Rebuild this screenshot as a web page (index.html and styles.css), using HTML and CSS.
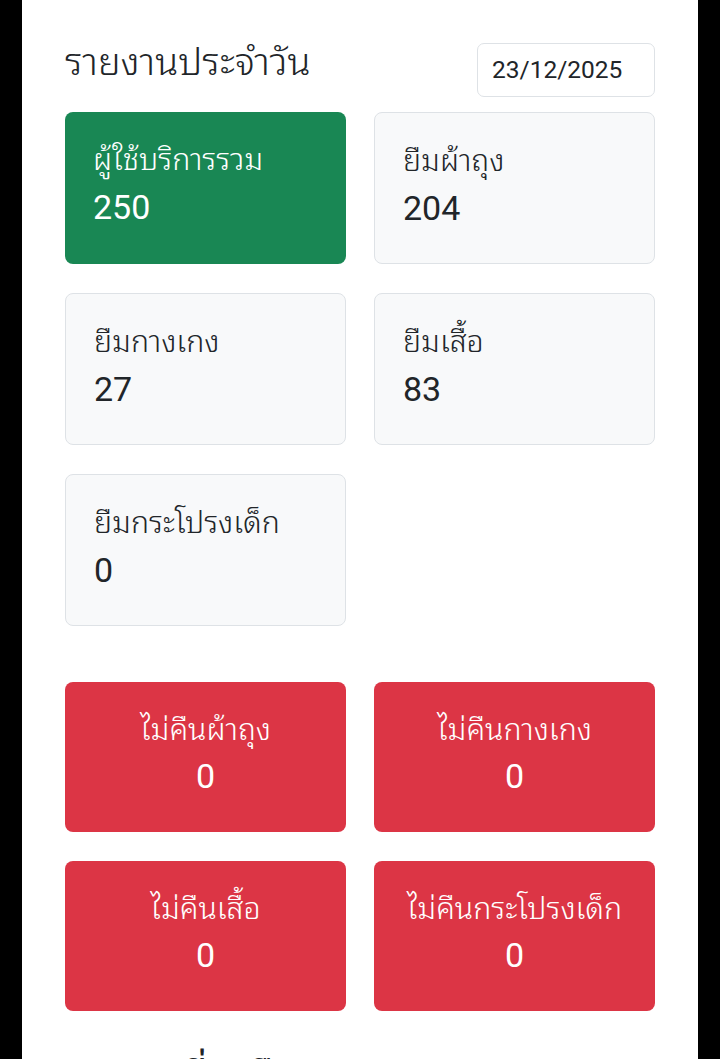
FILE: index.html
```html
<!DOCTYPE html>
<html lang="th">
<head>
<meta charset="utf-8">
<title>รายงานประจำวัน</title>
<link rel="stylesheet" href="styles.css">
</head>
<body>
<main class="page">
  <header class="head">
    <h1 class="title">รายงานประจำวัน</h1>
    <div class="date">23/12/2025</div>
  </header>
  <section class="grid">
    <div class="card card-green"><div class="label">ผู้ใช้บริการรวม</div><div class="num">250</div></div>
    <div class="card card-grey"><div class="label">ยืมผ้าถุง</div><div class="num">204</div></div>
    <div class="card card-grey"><div class="label">ยืมกางเกง</div><div class="num">27</div></div>
    <div class="card card-grey"><div class="label">ยืมเสื้อ</div><div class="num">83</div></div>
    <div class="card card-grey"><div class="label">ยืมกระโปรงเด็ก</div><div class="num">0</div></div>
  </section>
  <section class="grid grid-red">
    <div class="card card-red"><div class="label">ไม่คืนผ้าถุง</div><div class="num">0</div></div>
    <div class="card card-red"><div class="label">ไม่คืนกางเกง</div><div class="num">0</div></div>
    <div class="card card-red"><div class="label">ไม่คืนเสื้อ</div><div class="num">0</div></div>
    <div class="card card-red"><div class="label">ไม่คืนกระโปรงเด็ก</div><div class="num">0</div></div>
  </section>
  <h2 class="subtitle">รายการที่รอคืน</h2>
</main>
</body>
</html>
```
FILE: styles.css
```css
html, body {
  margin: 0;
  padding: 0;
  background: #000;
  height: 100%;
  overflow: hidden;
}
body {
  font-family: Roboto, "Noto Sans Thai Looped", sans-serif;
  color: #212529;
}
.page {
  margin: 0 22px;
  background: #fff;
  min-height: 100%;
  padding: 43px 43px 0;
  box-sizing: border-box;
}
.head {
  display: flex;
  justify-content: space-between;
  align-items: center;
  height: 54px;
}
.title {
  margin: 0;
  font-size: 38px;
  font-weight: 300;
  line-height: 1.2;
  margin-top: -14px;
}
.date {
  width: 178px;
  height: 54px;
  box-sizing: border-box;
  border: 1px solid #dee2e6;
  border-radius: 7px;
  padding: 0 14px;
  font-size: 24.5px;
  line-height: 52px;
}
.grid {
  display: grid;
  grid-template-columns: 1fr 1fr;
  column-gap: 28px;
  row-gap: 29px;
  margin-top: 15px;
}
.grid-red {
  margin-top: 56px;
}
.card {
  box-sizing: border-box;
  height: 152px;
  border-radius: 8px;
  padding: 28px 28px;
}
.card-green {
  background: #198754;
  color: #fff;
}
.card-grey {
  background: #f8f9fa;
  border: 1px solid #dee2e6;
}
.card-red {
  background: #dc3545;
  color: #fff;
  text-align: center;
  height: 150px;
}
.label {
  font-size: 30.3px;
  font-weight: 300;
  line-height: 40px;
}
.num {
  font-size: 34px;
  line-height: 46px;
  margin-top: 4px;
}
.card-red .num {
  margin-top: 3px;
}
.subtitle {
  margin: 47px 0 0;
  font-size: 39px;
  font-weight: 400;
  line-height: 1;
}
```
